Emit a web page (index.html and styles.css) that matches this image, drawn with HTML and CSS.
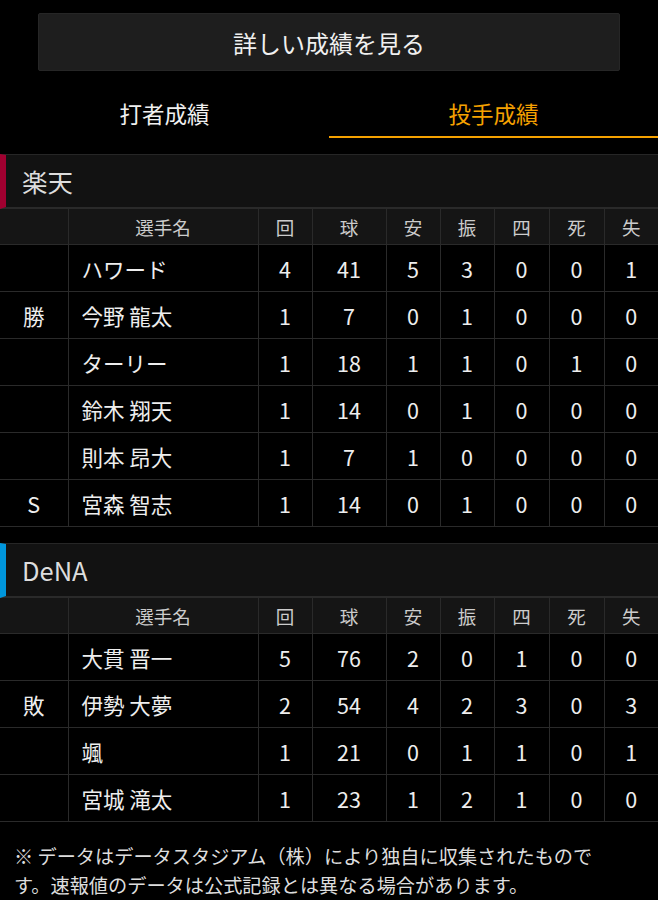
FILE: index.html
```html
<!DOCTYPE html>
<html lang="ja">
<head>
  <meta charset="UTF-8" />
  <meta name="viewport" content="width=device-width, initial-scale=1.0"/>
  <title>投手成績</title>
  <link rel="stylesheet" href="styles.css">
</head>
<body>
  <div class="more">
    <button class="more-btn">詳しい成績を見る</button>
  </div>

  <div class="tabs">
    <div class="tab">打者成績</div>
    <div class="tab active">投手成績</div>
  </div>

  <div class="team team-eagles">楽天</div>
  <table class="stats">
    <colgroup>
      <col class="c-res"><col class="c-name"><col class="c-s"><col class="c-w"><col class="c-s">
      <col class="c-s"><col class="c-m"><col class="c-m"><col class="c-s">
    </colgroup>
    <thead>
      <tr><th></th><th>選手名</th><th>回</th><th>球</th><th>安</th><th>振</th><th>四</th><th>死</th><th>失</th></tr>
    </thead>
    <tbody>
      <tr><td></td><td class="name">ハワード</td><td>4</td><td>41</td><td>5</td><td>3</td><td>0</td><td>0</td><td>1</td></tr>
      <tr><td>勝</td><td class="name">今野 龍太</td><td>1</td><td>7</td><td>0</td><td>1</td><td>0</td><td>0</td><td>0</td></tr>
      <tr><td></td><td class="name">ターリー</td><td>1</td><td>18</td><td>1</td><td>1</td><td>0</td><td>1</td><td>0</td></tr>
      <tr><td></td><td class="name">鈴木 翔天</td><td>1</td><td>14</td><td>0</td><td>1</td><td>0</td><td>0</td><td>0</td></tr>
      <tr><td></td><td class="name">則本 昂大</td><td>1</td><td>7</td><td>1</td><td>0</td><td>0</td><td>0</td><td>0</td></tr>
      <tr><td>S</td><td class="name">宮森 智志</td><td>1</td><td>14</td><td>0</td><td>1</td><td>0</td><td>0</td><td>0</td></tr>
    </tbody>
  </table>

  <div class="team team-dena">DeNA</div>
  <table class="stats">
    <colgroup>
      <col class="c-res"><col class="c-name"><col class="c-s"><col class="c-w"><col class="c-s">
      <col class="c-s"><col class="c-m"><col class="c-m"><col class="c-s">
    </colgroup>
    <thead>
      <tr><th></th><th>選手名</th><th>回</th><th>球</th><th>安</th><th>振</th><th>四</th><th>死</th><th>失</th></tr>
    </thead>
    <tbody>
      <tr><td></td><td class="name">大貫 晋一</td><td>5</td><td>76</td><td>2</td><td>0</td><td>1</td><td>0</td><td>0</td></tr>
      <tr><td>敗</td><td class="name">伊勢 大夢</td><td>2</td><td>54</td><td>4</td><td>2</td><td>3</td><td>0</td><td>3</td></tr>
      <tr><td></td><td class="name">颯</td><td>1</td><td>21</td><td>0</td><td>1</td><td>1</td><td>0</td><td>1</td></tr>
      <tr><td></td><td class="name">宮城 滝太</td><td>1</td><td>23</td><td>1</td><td>2</td><td>1</td><td>0</td><td>0</td></tr>
    </tbody>
  </table>

  <p class="note">※ データはデータスタジアム（株）により独自に収集されたものです。速報値のデータは公式記録とは異なる場合があります。</p>
</body>
</html>
```

FILE: styles.css
```css
body {
  margin: 0;
  background-color: #000;
  color: #eee;
  font-family: "Noto Sans CJK JP", "Noto Sans", sans-serif;
}

.more {
  padding: 13px 38px 0;
}

.more-btn {
  display: block;
  width: 100%;
  height: 58px;
  background-color: #1e1e1e;
  border: 1px solid #262626;
  border-radius: 2px;
  color: #f0f0f0;
  font-family: inherit;
  font-size: 24px;
}

.tabs {
  display: flex;
  margin-top: 20px;
}

.tab {
  flex: 1;
  height: 45px;
  line-height: 45px;
  text-align: center;
  font-size: 22.5px;
  color: #f0f0f0;
  border-bottom: 2px solid transparent;
}

.tab.active {
  color: #f5a100;
  border-bottom-color: #f5a100;
}

.team {
  margin-top: 16px;
  height: 52px;
  line-height: 52px;
  padding-left: 16px;
  background-color: #121212;
  border-top: 1px solid #262626;
  border-bottom: 2px solid #2a2a2a;
  border-left: 6px solid #a00030;
  font-size: 25.5px;
  color: #ddd;
}

.team-dena {
  border-left-color: #0096dc;
}

.stats {
  width: 100%;
  table-layout: fixed;
  border-collapse: collapse;
}

.c-res { width: 68px; }
.c-name { width: 190px; }
.c-s { width: 54px; }
.c-w { width: 74px; }
.c-m { width: 55px; }

.stats th,
.stats td {
  border: 1px solid #2a2a2a;
  text-align: center;
  padding: 0;
}

.stats tr > :first-child { border-left: none; }
.stats tr > :last-child { border-right: none; }
.stats thead th { border-top: none; }

.stats th {
  height: 35px;
  background-color: #151515;
  font-weight: normal;
  font-size: 18.5px;
  color: #ccc;
}

.stats td {
  height: 46px;
  font-size: 21.5px;
  color: #eee;
}

.stats td.name {
  text-align: left;
  padding-left: 13px;
}

.note {
  margin: 20px 40px 0 14px;
  font-size: 19.2px;
  line-height: 29px;
  color: #ddd;
}
```
